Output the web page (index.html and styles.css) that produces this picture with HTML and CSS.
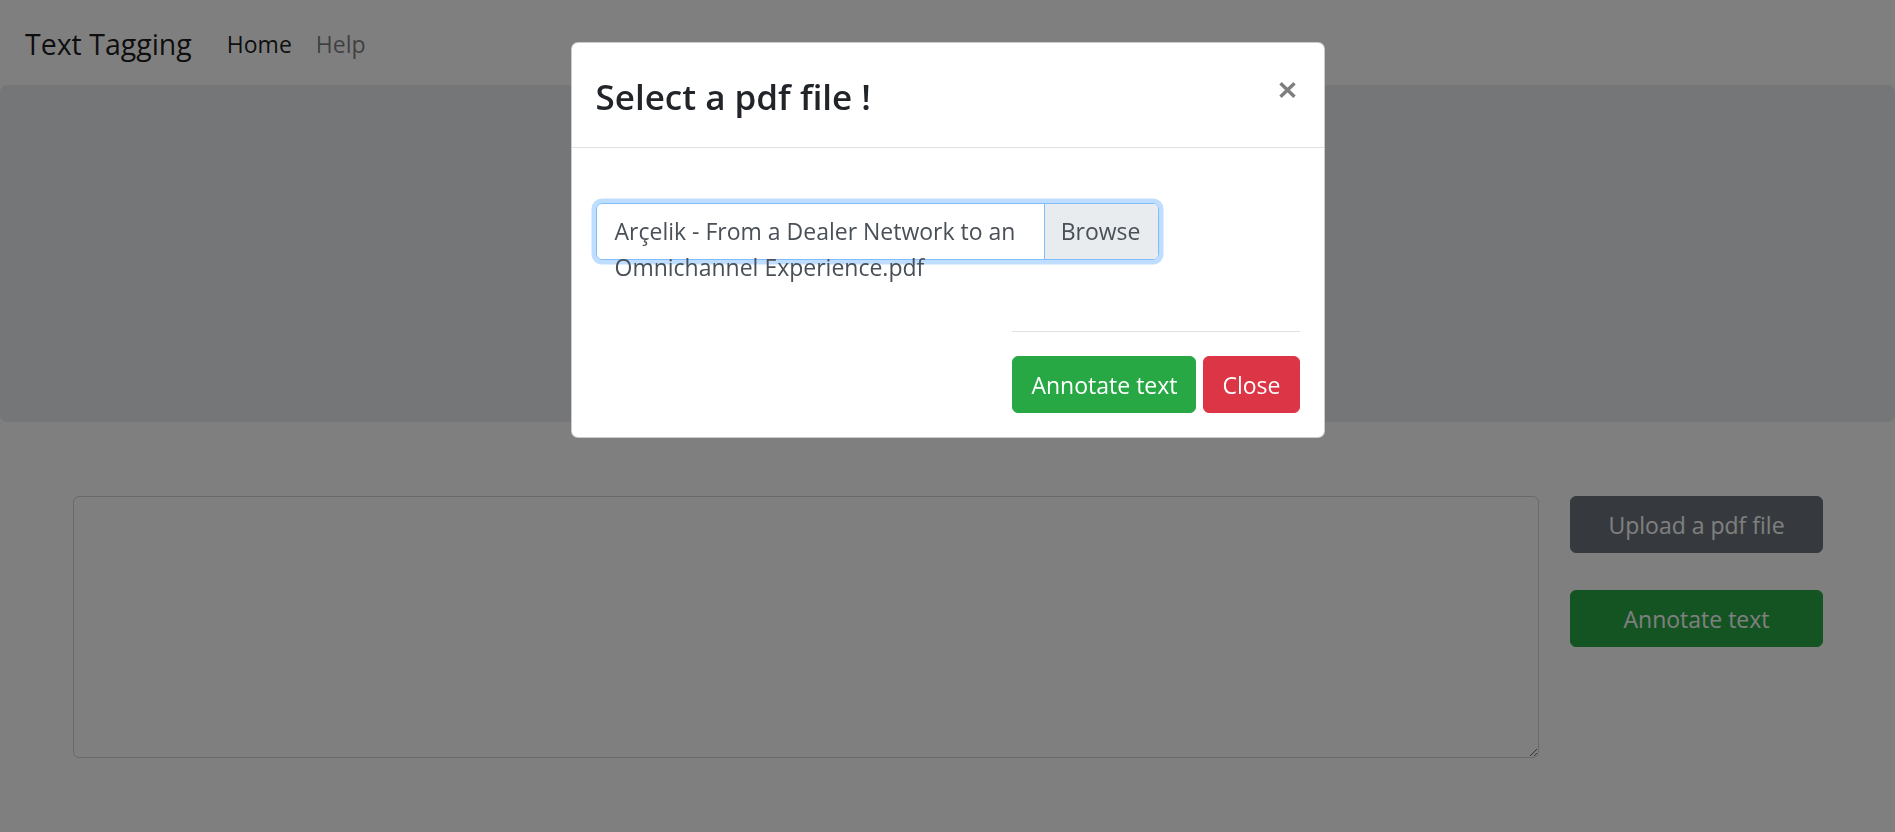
FILE: index.html
```html
<!DOCTYPE html>
<html lang="en">
<head>
<meta charset="utf-8">
<title>Text Tagging</title>
<link rel="stylesheet" href="styles.css">
</head>
<body>
<nav class="navbar">
  <a class="brand" href="#">Text Tagging</a>
  <ul class="nav">
    <li><a class="nav-link active" href="#">Home</a></li>
    <li><a class="nav-link" href="#">Help</a></li>
  </ul>
</nav>
<div class="jumbotron"></div>
<main class="workspace">
  <textarea class="editor"></textarea>
  <div class="actions">
    <button class="btn btn-secondary btn-block">Upload a pdf file</button>
    <button class="btn btn-success btn-block">Annotate text</button>
  </div>
</main>

<div class="backdrop"></div>
<div class="modal">
  <div class="modal-content">
    <div class="modal-header">
      <h4 class="modal-title">Select a pdf file !</h4>
      <button class="close" aria-label="Close">
        <svg width="17" height="16" viewBox="0 0 17 16"><path d="M1.5 1.2 L15.5 14.8 M15.5 1.2 L1.5 14.8" stroke="#000" stroke-width="3.4" fill="none"/></svg>
      </button>
    </div>
    <div class="modal-body">
      <div class="custom-file">
        <span class="file-name">Arçelik - From a Dealer Network to an<br>Omnichannel Experience.pdf</span>
        <span class="browse">Browse</span>
      </div>
    </div>
    <div class="modal-footer">
      <div class="footer-inner">
        <button class="btn btn-success">Annotate text</button>
        <button class="btn btn-danger">Close</button>
      </div>
    </div>
  </div>
</div>
</body>
</html>
```

FILE: styles.css
```css
* { box-sizing: border-box; }

html, body {
  margin: 0;
  padding: 0;
  background: #fff;
}

body {
  font-family: "Open Sans", "Noto Sans", "Liberation Sans", sans-serif;
  font-size: 23px;
  line-height: 36px;
  color: #212529;
  height: 832px;
  overflow: hidden;
}

/* navbar */
.navbar {
  display: flex;
  align-items: center;
  padding: 13px 24px 12px 25px;
  height: 85px;
}

.brand {
  font-size: 28.5px;
  line-height: 45px;
  padding: 9px 0 6px;
  margin-right: 23px;
  color: rgba(0, 0, 0, .9);
  text-decoration: none;
}

.nav {
  display: flex;
  list-style: none;
  margin: 0;
  padding: 0;
}

.nav-link {
  display: block;
  padding: 12px 12px 10px;
  color: rgba(0, 0, 0, .5);
  text-decoration: none;
}

.nav-link.active {
  color: rgba(0, 0, 0, .9);
}

/* jumbotron */
.jumbotron {
  height: 337px;
  background: #e9ecef;
  border-radius: 7px;
  margin-bottom: 74px;
}

/* main area */
.workspace {
  display: flex;
  gap: 31px;
  padding: 0 72px 0 73px;
}

.editor {
  flex: 1;
  height: 262px;
  border: 1px solid #ced4da;
  border-radius: 6px;
  resize: vertical;
  font: inherit;
  padding: 9px 18px;
}

.actions {
  width: 253px;
  display: flex;
  flex-direction: column;
  gap: 37px;
}

/* buttons */
.btn {
  font-family: inherit;
  font-size: 23px;
  line-height: 36px;
  padding: 9.5px 18px;
  border: 1px solid transparent;
  border-radius: 6px;
  color: #fff;
  cursor: pointer;
  white-space: nowrap;
}

.btn-block { width: 100%; }

.btn-secondary { background: #6c757d; border-color: #6c757d; }
.btn-success { background: #28a745; border-color: #28a745; }
.btn-danger { background: #dc3545; border-color: #dc3545; }

/* modal overlay */
.backdrop {
  position: fixed;
  inset: 0;
  background: #000;
  opacity: .5;
  z-index: 10;
}

.modal {
  position: fixed;
  inset: 0;
  z-index: 20;
}

.modal-content {
  width: 754px;
  margin: 42px auto 0;
  background: #fff;
  border: 1px solid rgba(0, 0, 0, .2);
  border-radius: 7px;
}

.modal-header {
  display: flex;
  align-items: flex-start;
  padding: 24px;
  border-bottom: 1px solid #dee2e6;
}

.modal-title {
  margin: 0;
  padding-top: 3px;
  font-size: 35px;
  font-weight: 600;
  line-height: 53px;
  color: #212529;
}

.close {
  margin: 15px 4px 0 auto;
  padding: 0;
  border: 0;
  background: transparent;
  opacity: .5;
  line-height: 0;
  cursor: pointer;
}

.modal-body {
  padding: 55px 24px 71px;
}

.custom-file {
  display: flex;
  width: 563px;
  height: 57px;
  border: 1px solid #80bdff;
  border-radius: 6px;
  box-shadow: 0 0 0 4.5px rgba(0, 123, 255, .25);
  color: #495057;
}

.file-name {
  flex: 1;
  padding: 9px 18px;
  white-space: nowrap;
  overflow: visible;
}

.browse {
  padding: 9px 17px 9px 16px;
  background: #e9ecef;
  border-left: 1px solid #80bdff;
  border-radius: 0 5px 5px 0;
}

.modal-footer {
  display: flex;
  justify-content: flex-end;
  padding: 0 24px 24px;
}

.footer-inner {
  display: flex;
  gap: 7px;
  padding-top: 24px;
  border-top: 1px solid #dee2e6;
}
```
